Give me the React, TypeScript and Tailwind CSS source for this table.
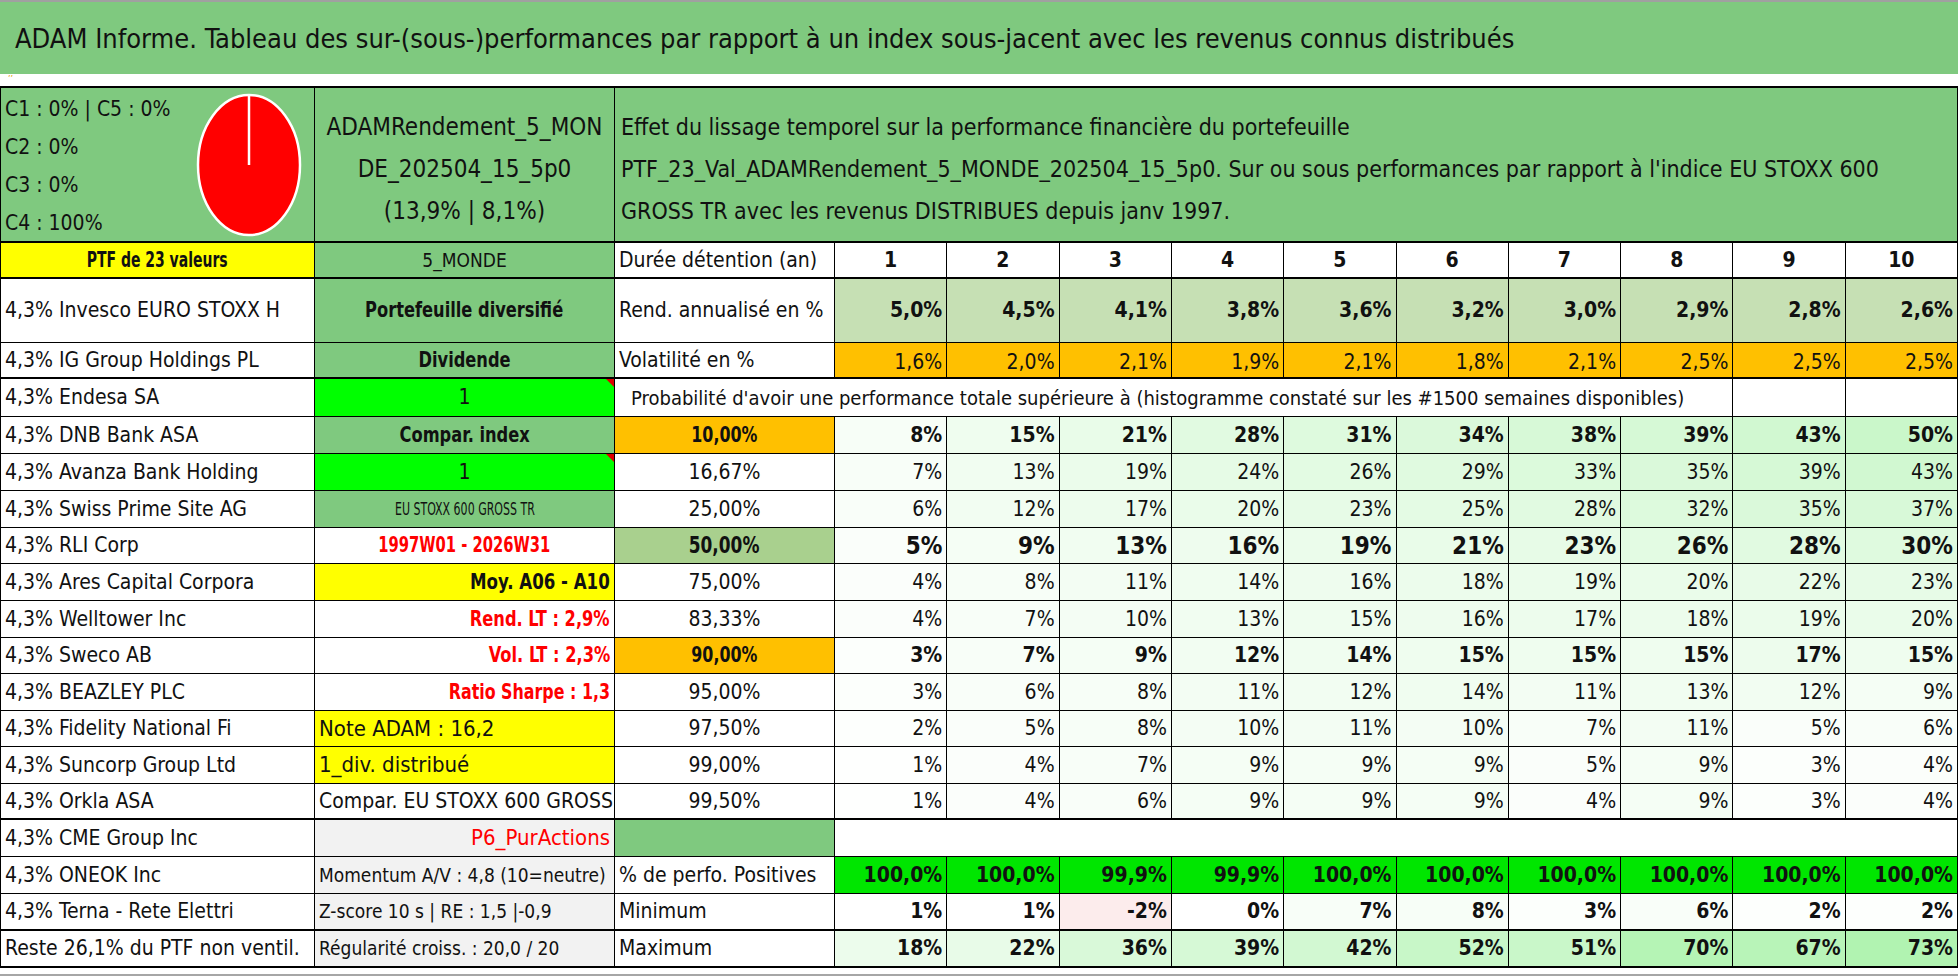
import type { CSSProperties, ReactNode } from "react";

const durations = ["1", "2", "3", "4", "5", "6", "7", "8", "9", "10"];
const rend = ["5,0%", "4,5%", "4,1%", "3,8%", "3,6%", "3,2%", "3,0%", "2,9%", "2,8%", "2,6%"];
const vol = ["1,6%", "2,0%", "2,1%", "1,9%", "2,1%", "1,8%", "2,1%", "2,5%", "2,5%", "2,5%"];
const positives = ["100,0%", "100,0%", "99,9%", "99,9%", "100,0%", "100,0%", "100,0%", "100,0%", "100,0%", "100,0%"];
const minimum = [1, 1, -2, 0, 7, 8, 3, 6, 2, 2];
const maximum = [18, 22, 36, 39, 42, 52, 51, 70, 67, 73];

type Weight = "normal" | "bold" | "big";

interface ProbRow {
  name: string;
  side: ReactNode;
  sideClass: string;
  level: ReactNode;
  levelClass?: string;
  weight: Weight;
  values: number[];
}

// the sheet uses a narrow font, so bold labels are squeezed horizontally
function Narrow({ className, children }: { className: string; children: ReactNode }) {
  return <span className={`inline-block whitespace-nowrap ${className}`}>{children}</span>;
}

const red = "text-[#ff0000] font-bold";

const probRows: ProbRow[] = [
  { name: "4,3% DNB Bank ASA", side: <Narrow className="scale-x-[0.86]">Compar. index</Narrow>, sideClass: "bg-[#7fc97f] justify-center font-bold", level: <Narrow className="scale-x-[0.84]">10,00%</Narrow>, levelClass: "bg-[#ffc000] font-bold", weight: "bold", values: [8, 15, 21, 28, 31, 34, 38, 39, 43, 50] },
  { name: "4,3% Avanza Bank Holding", side: "1", sideClass: "bg-[#00ff00] justify-center relative", level: "16,67%", weight: "normal", values: [7, 13, 19, 24, 26, 29, 33, 35, 39, 43] },
  { name: "4,3% Swiss Prime Site AG", side: <Narrow className="scale-x-[0.68]">EU STOXX 600 GROSS TR</Narrow>, sideClass: "bg-[#7fc97f] justify-center text-[18px]", level: "25,00%", weight: "normal", values: [6, 12, 17, 20, 23, 25, 28, 32, 35, 37] },
  { name: "4,3% RLI Corp", side: <Narrow className="scale-x-[0.78]">1997W01 - 2026W31</Narrow>, sideClass: `justify-center ${red}`, level: <Narrow className="scale-x-[0.82]">50,00%</Narrow>, levelClass: "bg-[#a9d08e] font-bold text-[23px]", weight: "big", values: [5, 9, 13, 16, 19, 21, 23, 26, 28, 30] },
  { name: "4,3% Ares Capital Corpora", side: <Narrow className="scale-x-[0.88] origin-right">Moy. A06 - A10</Narrow>, sideClass: "bg-[#ffff00] justify-end font-bold", level: "75,00%", weight: "normal", values: [4, 8, 11, 14, 16, 18, 19, 20, 22, 23] },
  { name: "4,3% Welltower Inc", side: <Narrow className="scale-x-[0.86] origin-right">Rend. LT : 2,9%</Narrow>, sideClass: `justify-end ${red}`, level: "83,33%", weight: "normal", values: [4, 7, 10, 13, 15, 16, 17, 18, 19, 20] },
  { name: "4,3% Sweco AB", side: <Narrow className="scale-x-[0.86] origin-right">Vol. LT : 2,3%</Narrow>, sideClass: `justify-end ${red}`, level: <Narrow className="scale-x-[0.84]">90,00%</Narrow>, levelClass: "bg-[#ffc000] font-bold", weight: "bold", values: [3, 7, 9, 12, 14, 15, 15, 15, 17, 15] },
  { name: "4,3% BEAZLEY PLC", side: <Narrow className="scale-x-[0.84] origin-right">Ratio Sharpe : 1,3</Narrow>, sideClass: `justify-end ${red}`, level: "95,00%", weight: "normal", values: [3, 6, 8, 11, 12, 14, 11, 13, 12, 9] },
  { name: "4,3% Fidelity National Fi", side: "Note ADAM : 16,2", sideClass: "bg-[#ffff00] text-[22px]", level: "97,50%", weight: "normal", values: [2, 5, 8, 10, 11, 10, 7, 11, 5, 6] },
  { name: "4,3% Suncorp Group Ltd", side: "1_div. distribué", sideClass: "bg-[#ffff00] text-[22px]", level: "99,00%", weight: "normal", values: [1, 4, 7, 9, 9, 9, 5, 9, 3, 4] },
  { name: "4,3% Orkla ASA", side: "Compar. EU STOXX 600 GROSS TR", sideClass: "text-[21px]", level: "99,50%", weight: "normal", values: [1, 4, 6, 9, 9, 9, 4, 9, 3, 4] },
];

// light green colour scale used by the conditional formatting
function tint(v: number) {
  if (v < 0) return "#fcecec";
  const t = Math.max(0, Math.min(1, v / 80));
  const r = Math.round(255 - (255 - 170) * t);
  const g = Math.round(255 - (255 - 242) * t);
  return `rgb(${r},${g},${r})`;
}

function Cell({
  className = "",
  style,
  children,
}: {
  className?: string;
  style?: CSSProperties;
  children?: ReactNode;
}) {
  return (
    <div
      className={`border-r border-b border-black overflow-hidden whitespace-nowrap flex items-center px-[4px] ${className}`}
      style={style}
    >
      {children}
    </div>
  );
}

function Triangle() {
  return (
    <span className="absolute top-0 right-0 w-0 h-0 border-l-[8px] border-l-transparent border-t-[8px] border-t-[#e00000]" />
  );
}

function Pie() {
  return (
    <svg width="106" height="144" viewBox="0 0 106 144" className="mr-[8px] mt-[5px]">
      <ellipse cx="53" cy="72" rx="51" ry="70" fill="#ff0000" stroke="#ffffff" strokeWidth="2.5" />
      <line x1="53" y1="2" x2="53" y2="72" stroke="#ffffff" strokeWidth="2.5" />
    </svg>
  );
}

export default function App() {
  const bottom2 = "border-b-2";
  return (
    <div className="w-[1958px] h-[979px] bg-white text-[#111] font-['Liberation_Sans_Narrow','DejaVu_Sans_Condensed','Liberation_Sans',sans-serif] text-[21px] leading-none overflow-hidden">
      <div className="h-[2px] bg-[#a0a0a0]" />
      <div className="h-[72px] bg-[#7fc97f] flex items-center pl-[15px] text-[27px]">
        ADAM Informe. Tableau des sur-(sous-)performances par rapport à un index sous-jacent avec les revenus connus distribués
      </div>
      <div className="h-[12px] pl-[8px] text-[9px] text-[#e0a000] leading-[10px]">’’</div>

      <div className="grid grid-cols-[314px_300px_220px_repeat(10,minmax(0,1fr))] grid-rows-[155px_36px_64px_36px_38px_37px_37px_37px_36px_37px_37px_36px_37px_36px_37px_36px_37px_37px_37px_37px] border-t-2 border-l border-black">
        {/* header block */}
        <Cell className={`bg-[#7fc97f] items-start justify-between ${bottom2}`}>
          <div className="leading-[38px] pt-[2px] text-[21px]">
            <div>C1 : 0% | C5 : 0%</div>
            <div>C2 : 0%</div>
            <div>C3 : 0%</div>
            <div>C4 : 100%</div>
          </div>
          <Pie />
        </Cell>
        <Cell className={`bg-[#7fc97f] flex-col justify-center text-center text-[24px] leading-[42px] pt-[8px] ${bottom2}`}>
          <div>ADAMRendement_5_MON</div>
          <div>DE_202504_15_5p0</div>
          <div>(13,9% | 8,1%)</div>
        </Cell>
        <Cell className={`col-span-11 bg-[#7fc97f] flex-col items-start justify-center text-[23px] leading-[42px] pt-[8px] pl-[6px] ${bottom2}`}>
          <div>Effet du lissage temporel sur la performance financière du portefeuille</div>
          <div>PTF_23_Val_ADAMRendement_5_MONDE_202504_15_5p0. Sur ou sous performances par rapport à l'indice EU STOXX 600</div>
          <div>GROSS TR avec les revenus DISTRIBUES depuis janv 1997.</div>
        </Cell>

        {/* durations */}
        <Cell className={`bg-[#ffff00] justify-center font-bold ${bottom2}`}>
          <Narrow className="scale-x-[0.74]">PTF de 23 valeurs</Narrow>
        </Cell>
        <Cell className={`bg-[#7fc97f] justify-center text-[19px] ${bottom2}`}>5_MONDE</Cell>
        <Cell className={bottom2}>Durée détention (an)</Cell>
        {durations.map((d) => (
          <Cell key={d} className={`justify-center font-bold ${bottom2}`}>
            {d}
          </Cell>
        ))}

        {/* annualised return */}
        <Cell>4,3% Invesco EURO STOXX H</Cell>
        <Cell className="bg-[#7fc97f] justify-center font-bold">
          <Narrow className="scale-x-[0.86]">Portefeuille diversifié</Narrow>
        </Cell>
        <Cell>Rend. annualisé en %</Cell>
        {rend.map((v, i) => (
          <Cell key={i} className="bg-[#c6e0b4] justify-end font-bold">
            {v}
          </Cell>
        ))}

        {/* volatility */}
        <Cell className={bottom2}>4,3% IG Group Holdings PL</Cell>
        <Cell className={`bg-[#7fc97f] justify-center font-bold ${bottom2}`}>
          <Narrow className="scale-x-[0.86]">Dividende</Narrow>
        </Cell>
        <Cell className={bottom2}>Volatilité en %</Cell>
        {vol.map((v, i) => (
          <Cell key={i} className={`bg-[#ffc000] justify-end items-end pb-[4px] ${bottom2}`}>
            {v}
          </Cell>
        ))}

        {/* probability title */}
        <Cell>4,3% Endesa SA</Cell>
        <Cell className="bg-[#00ff00] justify-center relative">
          1
          <Triangle />
        </Cell>
        <Cell className="col-span-9 pl-[16px] text-[20px]">
          Probabilité d'avoir une performance totale supérieure à (histogramme constaté sur les #1500 semaines disponibles)
        </Cell>
        <Cell />
        <Cell />

        {probRows.map((row, ri) => {
          const last = ri === probRows.length - 1;
          const b = last ? bottom2 : "";
          const valueClass =
            row.weight === "bold" ? "font-bold" : row.weight === "big" ? "font-bold text-[24px]" : "";
          return [
            <Cell key={`a${ri}`} className={b}>
              {row.name}
            </Cell>,
            <Cell key={`b${ri}`} className={`${row.sideClass} ${b}`}>
              {row.side}
              {row.side === "1" && <Triangle />}
            </Cell>,
            <Cell key={`c${ri}`} className={`justify-center ${row.levelClass ?? ""} ${b}`}>
              {row.level}
            </Cell>,
            ...row.values.map((v, i) => (
              <Cell key={`v${ri}-${i}`} className={`justify-end ${valueClass} ${b}`} style={{ backgroundColor: tint(v) }}>
                {v}%
              </Cell>
            )),
          ];
        })}

        {/* spacer row */}
        <Cell>4,3% CME Group Inc</Cell>
        <Cell className="bg-[#f2f2f2] justify-end text-[#ff0000] text-[22px]">P6_PurActions</Cell>
        <Cell className="bg-[#7fc97f]" />
        <Cell className="col-span-10" />

        {/* positives */}
        <Cell>4,3% ONEOK Inc</Cell>
        <Cell className="bg-[#f2f2f2] text-[19px]">Momentum A/V : 4,8 (10=neutre)</Cell>
        <Cell>% de perfo. Positives</Cell>
        {positives.map((v, i) => (
          <Cell key={i} className="bg-[#00e600] justify-end font-bold">
            {v}
          </Cell>
        ))}

        {/* minimum */}
        <Cell className={bottom2}>4,3% Terna - Rete Elettri</Cell>
        <Cell className={`bg-[#f2f2f2] text-[19px] ${bottom2}`}>Z-score 10 s | RE : 1,5 |-0,9</Cell>
        <Cell className={bottom2}>Minimum</Cell>
        {minimum.map((v, i) => (
          <Cell key={i} className={`justify-end font-bold ${bottom2}`} style={{ backgroundColor: v <= 1 && v >= 0 ? "#ffffff" : tint(v) }}>
            {v}%
          </Cell>
        ))}

        {/* maximum */}
        <Cell className={bottom2}>Reste 26,1% du PTF non ventil.</Cell>
        <Cell className={`bg-[#f2f2f2] text-[19px] ${bottom2}`}>Régularité croiss. : 20,0 / 20</Cell>
        <Cell className={bottom2}>Maximum</Cell>
        {maximum.map((v, i) => (
          <Cell key={i} className={`justify-end font-bold ${bottom2}`} style={{ backgroundColor: tint(v) }}>
            {v}%
          </Cell>
        ))}
      </div>
      <div className="mt-[6px] h-[2px] bg-[#a6a6a6]" />
    </div>
  );
}
